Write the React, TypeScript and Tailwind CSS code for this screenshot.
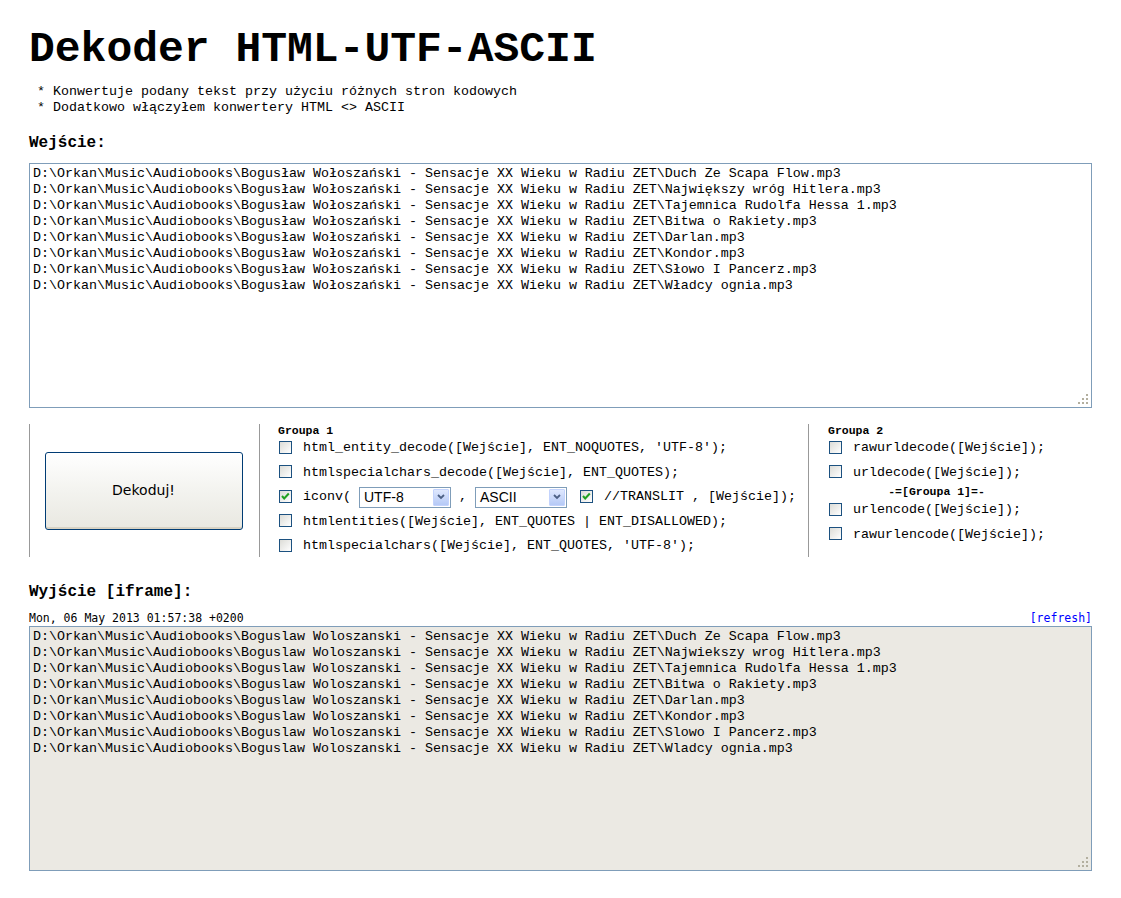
import React from "react";

const prefixIn = "D:\\Orkan\\Music\\Audiobooks\\Bogusław Wołoszański - Sensacje XX Wieku w Radiu ZET\\";
const prefixOut = "D:\\Orkan\\Music\\Audiobooks\\Boguslaw Woloszanski - Sensacje XX Wieku w Radiu ZET\\";
const inTitles = [
  "Duch Ze Scapa Flow.mp3",
  "Największy wróg Hitlera.mp3",
  "Tajemnica Rudolfa Hessa 1.mp3",
  "Bitwa o Rakiety.mp3",
  "Darlan.mp3",
  "Kondor.mp3",
  "Słowo I Pancerz.mp3",
  "Władcy ognia.mp3",
];
const outTitles = [
  "Duch Ze Scapa Flow.mp3",
  "Najwiekszy wrog Hitlera.mp3",
  "Tajemnica Rudolfa Hessa 1.mp3",
  "Bitwa o Rakiety.mp3",
  "Darlan.mp3",
  "Kondor.mp3",
  "Slowo I Pancerz.mp3",
  "Wladcy ognia.mp3",
];

function Grip() {
  return (
    <svg className="absolute right-[3px] bottom-[3px]" width="10" height="10" viewBox="0 0 10 10">
      <g fill="#b3af9f">
        <rect x="8" y="0" width="2" height="2" />
        <rect x="4" y="4" width="2" height="2" />
        <rect x="8" y="4" width="2" height="2" />
        <rect x="0" y="8" width="2" height="2" />
        <rect x="4" y="8" width="2" height="2" />
        <rect x="8" y="8" width="2" height="2" />
      </g>
    </svg>
  );
}

function Check({ checked = false }: { checked?: boolean }) {
  return (
    <span className="mb-[2px] ml-[1px] flex h-[13px] w-[13px] shrink-0 items-center justify-center border border-[#1c5180] bg-gradient-to-br from-[#dcdcd7] to-[#ffffff]">
      {checked && (
        <svg width="11" height="11" viewBox="0 0 11 11">
          <polyline points="2,5 4.2,7.5 8.8,2.5" fill="none" stroke="#21a121" strokeWidth="2" />
        </svg>
      )}
    </span>
  );
}

function Select({ value }: { value: string }) {
  return (
    <span className="flex h-[21px] w-[92px] shrink-0 items-center border border-[#7f9db9] bg-white">
      <span className="flex-1 pl-[4px] font-['Liberation_Sans',Arial,sans-serif] text-[14px] leading-[16px] text-black">
        {value}
      </span>
      <span className="mr-[1px] flex h-[17px] w-[16px] items-center justify-center rounded-[1px] border border-[#c3d3fd] bg-gradient-to-b from-[#dfe8fe] to-[#b5c9f6]">
        <svg width="8" height="6" viewBox="0 0 8 6">
          <polyline points="1,1 4,4 7,1" fill="none" stroke="#4d6185" strokeWidth="1.8" />
        </svg>
      </span>
    </span>
  );
}

function Row({ checked = false, children }: { checked?: boolean; children: React.ReactNode }) {
  return (
    <div className="flex h-[24.5px] items-center">
      <Check checked={checked} />
      <span className="ml-[11px] flex items-center whitespace-pre">{children}</span>
    </div>
  );
}

export default function App() {
  return (
    <div className="min-h-[898px] bg-white font-['Liberation_Mono','Courier_New',monospace] text-black">
      <div className="w-[1092px] pl-[29px]">
        <h1 className="pt-[26px] text-[43px] leading-[48px] font-bold">Dekoder HTML-UTF-ASCII</h1>
        <div className="mt-[10px] text-[13.33px] leading-[16px] whitespace-pre">
          <div> * Konwertuje podany tekst przy użyciu różnych stron kodowych</div>
          <div> * Dodatkowo włączyłem konwertery HTML &lt;&gt; ASCII</div>
        </div>
        <div className="mt-[19px] text-[16px] leading-[16px] font-bold">Wejście:</div>
        <div className="relative mt-[12px] h-[245px] border border-[#7f9db9] bg-white pt-[2px] pl-[3px] text-[13.33px] leading-[16px] whitespace-pre">
          {inTitles.map((t) => (
            <div key={t}>{prefixIn + t}</div>
          ))}
          <Grip />
        </div>

        <div className="mt-[16px] flex h-[133px]">
          <div className="flex w-[230px] items-center justify-center border-l border-[#999999] pr-[2px]">
            <button className="h-[78px] w-[198px] rounded-[3px] border border-[#003c74] bg-gradient-to-b from-[#ffffff] via-[#f3f3ef] to-[#e9e8e1] font-['DejaVu_Sans',Tahoma,sans-serif] text-[14px] text-black shadow-[inset_0_-2px_0_#d8d2c3]">
              Dekoduj!
            </button>
          </div>
          <div className="w-[549px] border-l border-[#999999] pl-[18px] text-[13.33px] leading-[16px]">
            <div className="h-[12px] pt-[1px] text-[11.5px] leading-[11px] font-bold">Groupa 1</div>
            <Row>html_entity_decode([Wejście], ENT_NOQUOTES, 'UTF-8');</Row>
            <Row>htmlspecialchars_decode([Wejście], ENT_QUOTES);</Row>
            <Row checked>
              <span>iconv( </span>
              <Select value="UTF-8" />
              <span> , </span>
              <Select value="ASCII" />
              <span className="ml-[12px] flex items-center">
                <Check checked />
              </span>
              <span className="ml-[11px]">//TRANSLIT , [Wejście]);</span>
            </Row>
            <Row>htmlentities([Wejście], ENT_QUOTES | ENT_DISALLOWED);</Row>
            <Row>htmlspecialchars([Wejście], ENT_QUOTES, 'UTF-8');</Row>
          </div>
          <div className="flex-1 border-l border-[#999999] pl-[19px] text-[13.33px] leading-[16px]">
            <div className="w-fit">
              <div className="h-[12px] pt-[1px] text-[11.5px] leading-[11px] font-bold">Groupa 2</div>
              <Row>rawurldecode([Wejście]);</Row>
              <Row>urldecode([Wejście]);</Row>
              <div className="h-[13px] pt-[1px] text-center text-[11.5px] leading-[12px] font-bold">-=[Groupa 1]=-</div>
              <Row>urlencode([Wejście]);</Row>
              <Row>rawurlencode([Wejście]);</Row>
            </div>
          </div>
        </div>

        <div className="mt-[27px] text-[16px] leading-[16px] font-bold">Wyjście [iframe]:</div>
        <div className="mt-[11px] flex h-[14px] justify-between font-['DejaVu_Sans_Mono',monospace] text-[11.5px] leading-[14px]">
          <span>Mon, 06 May 2013 01:57:38 +0200</span>
          <span className="text-[#0000ff]">[refresh]</span>
        </div>
        <div className="relative mt-[1px] h-[245px] border border-[#7f9db9] bg-[#ebe9e3] pt-[2px] pl-[3px] text-[13.33px] leading-[16px] whitespace-pre">
          {outTitles.map((t) => (
            <div key={t}>{prefixOut + t}</div>
          ))}
          <Grip />
        </div>
      </div>
    </div>
  );
}
